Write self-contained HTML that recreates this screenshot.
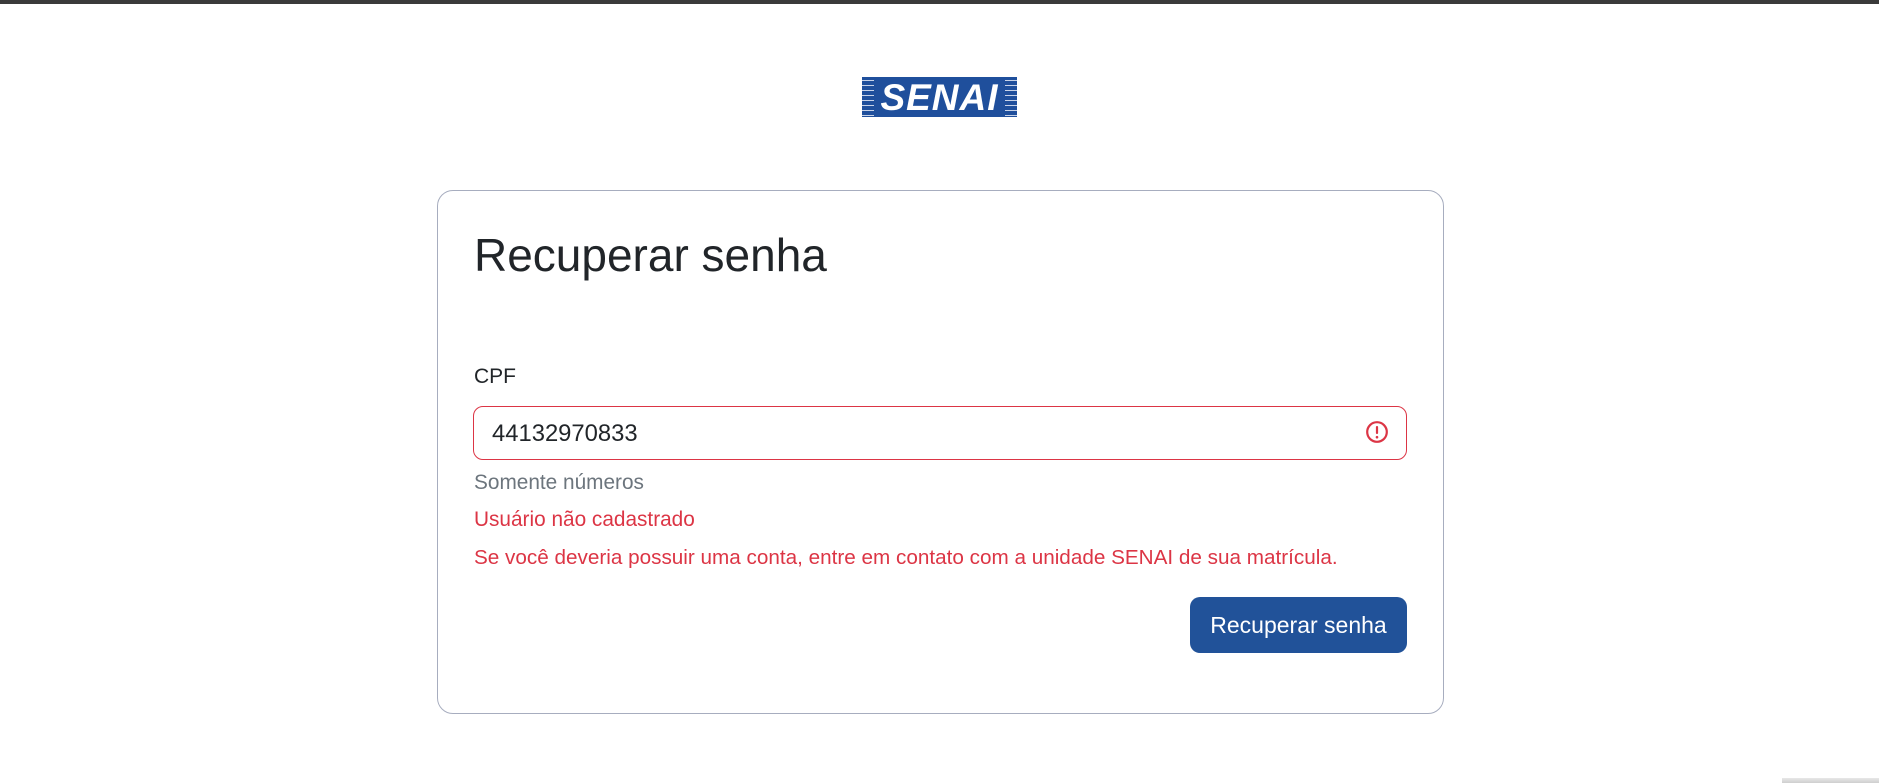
<!DOCTYPE html>
<html><head><meta charset="utf-8">
<style>
*{margin:0;padding:0;box-sizing:border-box}
html,body{width:1879px;height:783px;background:#fff;overflow:hidden;font-family:"Liberation Sans",sans-serif;position:relative}
.top{position:absolute;left:0;top:0;width:1879px;height:4px;background:#3a3a3a}
.logo{position:absolute;left:862px;top:77px;width:155px;height:40px;background:#1f4f9c;overflow:hidden}
.logo .l{position:absolute;top:0;width:12px;height:40px;background:repeating-linear-gradient(#1f4f9c 0 3px,#c8d3e8 3px 4px,#1f4f9c 4px 5px)}
.logo span{position:absolute;left:10px;top:1px;width:135px;text-align:center;color:#fff;font-weight:bold;font-style:italic;font-size:37px;line-height:40px;letter-spacing:1px}
.card{position:absolute;left:437px;top:190px;width:1007px;height:524px;border:1px solid #a7adbf;border-radius:16px}
.abs{position:absolute;white-space:nowrap}
h1{position:absolute;left:474px;top:227px;font-size:46px;font-weight:normal;color:#212529;line-height:56px}
.lbl{left:474px;top:363px;font-size:21px;color:#212529;line-height:28px}
.inp{position:absolute;left:473px;top:406px;width:934px;height:54px;border:1.3px solid #dc3545;border-radius:10px}
.val{left:492px;top:420px;font-size:23.8px;color:#212529;line-height:28px}
.help{left:474px;top:470px;font-size:20.8px;color:#6c757d;line-height:26px}
.e1{left:474px;top:507px;font-size:20.8px;color:#dc3545;line-height:26px}
.e2{left:474px;top:545px;font-size:20.7px;color:#dc3545;line-height:26px}
.btn{position:absolute;left:1190px;top:597px;width:217px;height:56px;background:#215299;border-radius:10px;color:#fff;font-size:23px;text-align:center;line-height:56px}
.shadow{position:absolute;left:1782px;top:778px;width:97px;height:5px;background:linear-gradient(#e8e8e8,#cfcfcf)}
</style></head><body>
<div class="top"></div>
<div class="logo"><div class="l" style="left:0"></div><div class="l" style="right:0"></div><span>SENAI</span></div>
<div class="card"></div>
<h1>Recuperar senha</h1>
<div class="abs lbl">CPF</div>
<div class="inp"></div>
<div class="abs val">44132970833</div>
<svg class="abs" style="left:1365px;top:420px" width="24" height="24" viewBox="0 0 24 24"><circle cx="12" cy="12" r="9.8" fill="none" stroke="#dc3545" stroke-width="2.2"/><rect x="10.9" y="6" width="2.2" height="8" rx="1" fill="#dc3545"/><circle cx="12" cy="17.2" r="1.3" fill="#dc3545"/></svg>
<div class="abs help">Somente números</div>
<div class="abs e1">Usuário não cadastrado</div>
<div class="abs e2">Se você deveria possuir uma conta, entre em contato com a unidade SENAI de sua matrícula.</div>
<div class="btn">Recuperar senha</div>
<div class="shadow"></div>
</body></html>
